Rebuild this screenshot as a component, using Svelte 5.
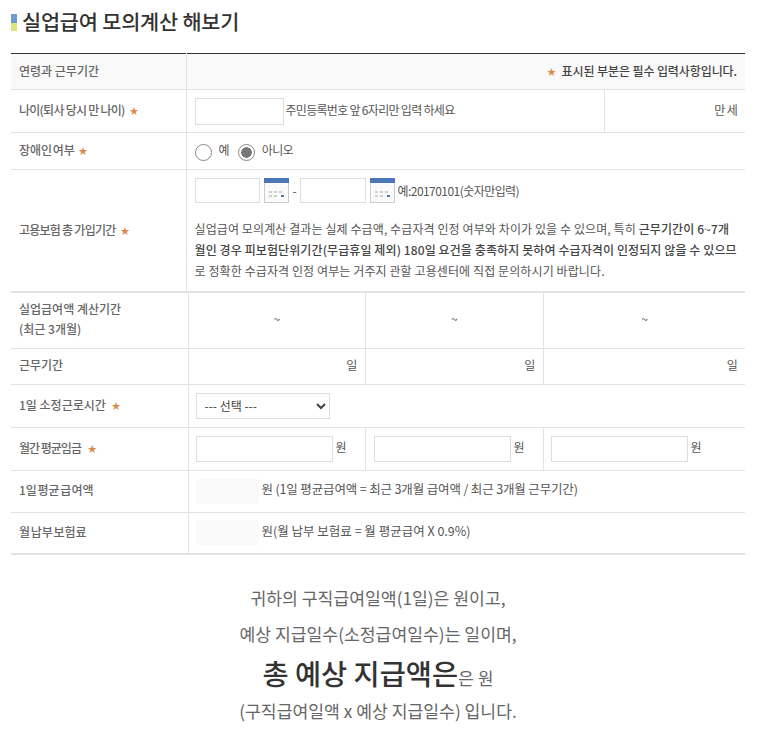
<script>
  const months = [0, 1, 2];
</script>

<div class="page">
  <h2 class="title"><span class="mark"></span>실업급여 모의계산 해보기</h2>

  <table class="t1">
    <colgroup><col class="c1" /><col /><col class="c3" /></colgroup>
    <tbody>
      <tr class="r1">
        <th>연령과 근무기간</th>
        <td colspan="2" class="note lift"><span class="star">★</span> <b>표시된 부분은 필수 입력사항입니다.</b></td>
      </tr>
      <tr class="r2">
        <th class="tight">나이(퇴사 당시 만 나이) <span class="star s2">★</span></th>
        <td class="age"><input class="in age-in" /> 주민등록번호 앞 6자리만 입력 하세요</td>
        <td class="right lift">만 세</td>
      </tr>
      <tr class="r3">
        <th class="narrow">장애인 여부 <span class="star s2">★</span></th>
        <td colspan="2" class="radios">
          <span class="radio"></span><span class="rl">예</span>
          <span class="radio on"></span><span class="rl">아니오</span>
        </td>
      </tr>
      <tr class="r4">
        <th class="tight">고용보험 총 가입기간 <span class="star s2">★</span></th>
        <td colspan="2" class="ins">
          <div class="dates">
            <input class="in date" />
            <svg class="cal" viewBox="0 0 25 25" width="25" height="25">
              <rect x="0.5" y="0.5" width="24" height="24" fill="#fafafa" stroke="#ccc" />
              <rect width="25" height="5" fill="#4a76b8" />
              <path d="M5 13h3v2H5zM10 13h3v2h-3zM15 13h3v2h-3zM5 17h3v2H5zM10 17h3v2h-3z" fill="#cfcfcf" />
              <rect x="17" y="17" width="3" height="2" fill="#4a76b8" />
            </svg>
            <span class="dash">-</span>
            <input class="in date d2" />
            <svg class="cal" viewBox="0 0 25 25" width="25" height="25">
              <rect x="0.5" y="0.5" width="24" height="24" fill="#fafafa" stroke="#ccc" />
              <rect width="25" height="5" fill="#4a76b8" />
              <path d="M5 13h3v2H5zM10 13h3v2h-3zM15 13h3v2h-3zM5 17h3v2H5zM10 17h3v2h-3z" fill="#cfcfcf" />
              <rect x="17" y="17" width="3" height="2" fill="#4a76b8" />
            </svg>
            <span class="eg">예:20170101(숫자만입력)</span>
          </div>
          <p class="desc">실업급여 모의계산 결과는 실제 수급액, 수급자격 인정 여부와 차이가 있을 수 있으며, 특히 <b>근무기간이 6~7개월인 경우 피보험단위기간(무급휴일 제외) 180일 요건을 충족하지 못하여 수급자격이 인정되지 않을 수 있으므</b>로 정확한 수급자격 인정 여부는 거주지 관할 고용센터에 직접 문의하시기 바랍니다.</p>
        </td>
      </tr>
    </tbody>
  </table>

  <table class="t2">
    <colgroup><col class="k" /><col class="m" /><col class="m2" /><col /></colgroup>
    <tbody>
      <tr class="h55">
        <th>실업급여액 계산기간<br />(최근 3개월)</th>
        {#each months as m}<td class="ctr lift">~</td>{/each}
      </tr>
      <tr class="h36">
        <th>근무기간</th>
        {#each months as m}<td class="right day lift">일</td>{/each}
      </tr>
      <tr class="h43">
        <th>1일 소정근로시간 <span class="star s2">★</span></th>
        <td colspan="3" class="p7">
          <select class="sel"><option>--- 선택 ---</option></select>
        </td>
      </tr>
      <tr class="h43">
        <th class="tighter">월간 평균임금 <span class="star s2">★</span></th>
        {#each months as m}<td class="p7"><input class="in wage" /> <span class="won">원</span></td>{/each}
      </tr>
      <tr class="h42">
        <th class="narrow">1일 평균 급여액</th>
        <td colspan="3" class="p7"><span class="ro"></span><span class="after">원 (1일 평균급여액 = 최근 3개월 급여액 / 최근 3개월 근무기간)</span></td>
      </tr>
      <tr class="h41">
        <th class="narrow">월 납부 보험료</th>
        <td colspan="3" class="p7"><span class="ro"></span><span class="after wide">원(월 납부 보험료 = 월 평균급여 X 0.9%)</span></td>
      </tr>
    </tbody>
  </table>

  <div class="result">
    <p>귀하의 구직급여일액(1일)은 원이고,</p>
    <p>예상 지급일수(소정급여일수)는 일이며,</p>
    <p class="total"><strong>총 예상 지급액은</strong>은 원</p>
    <p>(구직급여일액 x 예상 지급일수) 입니다.</p>
  </div>
</div>

<style>
  :global(body) {
    margin: 0;
    background: #fff;
    font-family: "Noto Sans CJK KR", "Noto Sans", sans-serif;
    color: #555;
  }
  .page {
    width: 734px;
    margin-left: 11px;
    height: 740px;
    overflow: hidden;
  }
  .title {
    margin: 0;
    height: 53px;
    padding-top: 5px;
    box-sizing: border-box;
    display: flex;
    align-items: flex-start;
    font-size: 20.8px;
    line-height: 32px;
    font-weight: 500;
    color: #333;
    letter-spacing: -0.2px;
  }
  .mark {
    width: 6px;
    height: 17px;
    margin: 9px 5px 0 0;
    background: linear-gradient(#6b9bd0 0 9px, #dbe57c 9px);
  }
  table {
    width: 734px;
    border-collapse: collapse;
    table-layout: fixed;
    font-size: 12px;
    letter-spacing: -0.7px;
  }
  .t1 { border-top: 1px solid #333; }
  .c1 { width: 175px; }
  .c3 { width: 141px; }
  th, td {
    border-bottom: 1px solid #e3e3e3;
    border-left: 1px solid #e3e3e3;
    padding: 0;
    font-weight: 400;
    text-align: left;
    color: #555;
  }
  th {
    border-left: 0;
    padding: 0 0 3px 8px;
    font-weight: 500;
    color: #666;
    letter-spacing: 0;
  }
  td.lift { padding-bottom: 3px; }
  th.tight { letter-spacing: -0.75px; }
  th.tighter { letter-spacing: -1px; }
  th.narrow { word-spacing: -2px; }
  b { font-weight: 500; color: #444; }
  .r1 { height: 36px; }
  .r1 th, .r1 td { background: #f9f9f9; }
  .r2 { height: 43px; }
  .r3 { height: 37px; }
  .r4 th, .r4 td { border-bottom-width: 2px; }
  .note { text-align: right; padding-right: 8px; letter-spacing: -0.1px; }
  .note .star { margin-right: 3px; }
  .star {
    color: #d98b4e;
    font-size: 9px;
    letter-spacing: 0;
    word-spacing: 0;
    position: relative;
    top: -1px;
  }
  .s2 { margin-left: 3px; }
  .tighter .s2 { margin-left: 5px; }
  .age { padding-left: 8px; white-space: nowrap; }
  .in {
    border: 1px solid #ddd;
    box-sizing: border-box;
    background: #fff;
    padding: 0;
    margin: 0;
    vertical-align: middle;
  }
  .age-in { width: 89px; height: 27px; }
  .right { text-align: right; padding-right: 8px; }
  .radios { padding-left: 8px; }
  .radio {
    display: inline-block;
    width: 17px;
    height: 17px;
    box-sizing: border-box;
    border: 1px solid #8a8a8a;
    border-radius: 50%;
    vertical-align: middle;
    background: #fff;
  }
  .radio.on { background: radial-gradient(circle, #777 0 5px, #fff 5.5px); }
  .rl { margin: 0 7px 0 7px; }
  .ins { padding: 8px 8px 10px 8px; }
  .dates { display: flex; align-items: center; height: 25px; }
  .date { width: 65px; height: 25px; }
  .cal { margin-left: 4px; flex: none; }
  .dash { margin: 0 3px 0 4px; width: 4px; }
  .d2 { width: 66px; }
  .eg { margin-left: 3px; letter-spacing: -0.55px; }
  .desc {
    margin: 15px 0 0;
    line-height: 21px;
    letter-spacing: 0.1px;
    word-break: break-all;
  }
  .k { width: 177px; }
  .m { width: 177px; }
  .m2 { width: 178px; }
  .h55 { height: 55px; }
  .h55 th { line-height: 20px; }
  .h36 { height: 36px; }
  .h43 { height: 43px; }
  .h42 { height: 42px; }
  .h41 { height: 42px; }
  .t2 tr:last-child th, .t2 tr:last-child td { border-bottom-width: 2px; }
  .ctr { text-align: center; }
  .p7 { padding-left: 7px; white-space: nowrap; }
  .p7:nth-child(3) { padding-left: 8px; }
  .sel {
    width: 134px;
    height: 26px;
    border: 1px solid #ddd;
    background: #fff;
    font: inherit;
    color: #444;
    padding-left: 4px;
    vertical-align: middle;
  }
  .wage { width: 137px; height: 26px; }
  .won { margin-left: 1px; }
  .ro {
    display: inline-block;
    width: 63px;
    height: 25px;
    background: #fafafa;
    vertical-align: middle;
  }
  .after { margin-left: 3px; font-size: 12.5px; letter-spacing: -0.15px; }
  .after.wide { letter-spacing: 0; }
  .result {
    text-align: center;
    color: #666;
    font-size: 17.2px;
    padding-top: 25px;
  }
  .result p { margin: 0; line-height: 36px; }
  .result .total { height: 41px; line-height: 42px; }
  .total strong { font-size: 28.4px; font-weight: 500; color: #333; }
</style>
